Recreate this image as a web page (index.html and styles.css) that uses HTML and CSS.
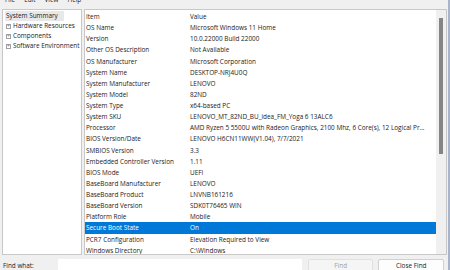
FILE: index.html
```html
<!DOCTYPE html>
<html lang="en">
<head>
 <meta charset="UTF-8">
 <title>System Information</title>
 <link rel="stylesheet" href="styles.css">
</head>
<body>
<div class="window">
 <div class="menubar">
  <span>File</span><span>Edit</span><span>View</span><span>Help</span>
 </div>
 <div class="main">
  <ul class="tree">
   <li class="root">System Summary</li>
   <li><span class="plus">+</span>Hardware Resources</li>
   <li><span class="plus">+</span>Components</li>
   <li><span class="plus">+</span>Software Environment</li>
  </ul>
  <div class="list">
   <div class="rows">
    <div class="row head"><span>Item</span><span>Value</span></div>
    <div class="row"><span>OS Name</span><span>Microsoft Windows 11 Home</span></div>
    <div class="row"><span>Version</span><span>10.0.22000 Build 22000</span></div>
    <div class="row"><span>Other OS Description</span><span>Not Available</span></div>
    <div class="row"><span>OS Manufacturer</span><span>Microsoft Corporation</span></div>
    <div class="row"><span>System Name</span><span>DESKTOP-NRJ4U0Q</span></div>
    <div class="row"><span>System Manufacturer</span><span>LENOVO</span></div>
    <div class="row"><span>System Model</span><span>82ND</span></div>
    <div class="row"><span>System Type</span><span>x64-based PC</span></div>
    <div class="row"><span>System SKU</span><span>LENOVO_MT_82ND_BU_idea_FM_Yoga 6 13ALC6</span></div>
    <div class="row"><span>Processor</span><span>AMD Ryzen 5 5500U with Radeon Graphics, 2100 Mhz, 6 Core(s), 12 Logical Pr...</span></div>
    <div class="row"><span>BIOS Version/Date</span><span>LENOVO H6CN11WW(V1.04), 7/7/2021</span></div>
    <div class="row"><span>SMBIOS Version</span><span>3.3</span></div>
    <div class="row"><span>Embedded Controller Version</span><span>1.11</span></div>
    <div class="row"><span>BIOS Mode</span><span>UEFI</span></div>
    <div class="row"><span>BaseBoard Manufacturer</span><span>LENOVO</span></div>
    <div class="row"><span>BaseBoard Product</span><span>LNVNB161216</span></div>
    <div class="row"><span>BaseBoard Version</span><span>SDK0T76465 WIN</span></div>
    <div class="row"><span>Platform Role</span><span>Mobile</span></div>
    <div class="row selected"><span>Secure Boot State</span><span>On</span></div>
    <div class="row"><span>PCR7 Configuration</span><span>Elevation Required to View</span></div>
    <div class="row"><span>Windows Directory</span><span>C:\Windows</span></div>
   </div>
   <div class="scrollbar"><div class="thumb"></div></div>
  </div>
 </div>
 <div class="findbar">
  <label>Find what:</label>
  <div class="find-input"></div>
  <button class="btn" disabled>Find</button>
  <button class="btn">Close Find</button>
 </div>
</div>
</body>
</html>
```

FILE: styles.css
```css
html, body {
 margin: 0;
 padding: 0;
}
body {
 width: 450px;
 height: 270px;
 overflow: hidden;
 background: #f0f0f0;
 font-family: "Open Sans", "Noto Sans", sans-serif;
 font-size: 6.4px;
 color: #1a1a1a;
}
.window {
 height: 270px;
 border-right: 2px solid #a9b3c9;
 box-sizing: border-box;
 display: flex;
 flex-direction: column;
}
.menubar {
 height: 9px;
 overflow: hidden;
 display: flex;
 gap: 9px;
 padding-left: 5px;
}
.menubar span {
 line-height: 8px;
 margin-top: -4px;
}
.main {
 display: flex;
 height: 246px;
 padding: 0 1px 0 2px;
 gap: 2px;
}
.tree {
 list-style: none;
 margin: 0;
 padding: 1px 0 0 2px;
 width: 80px;
 box-sizing: border-box;
 background: #fff;
 border: 1px solid #c8c8c8;
}
.tree li {
 height: 10px;
 line-height: 10px;
 white-space: nowrap;
 display: flex;
 align-items: center;
}
.tree .root {
 background: #e8e8e8;
 width: 58px;
 padding-left: 1px;
}
.plus {
 width: 5px;
 height: 5px;
 border: 1px solid #a0a0a0;
 box-sizing: border-box;
 font-size: 5px;
 line-height: 3px;
 text-align: center;
 color: #808080;
 margin: 0 2px 0 1px;
}
.list {
 flex: 1;
 display: flex;
 background: #fff;
 border: 1px solid #c8c8c8;
 overflow: hidden;
}
.rows {
 flex: 1;
 padding-top: 1px;
}
.row {
 display: grid;
 grid-template-columns: 104px 1fr;
 height: 11.14px;
 line-height: 11.14px;
 padding-left: 1px;
 white-space: nowrap;
 overflow: hidden;
}
.row.selected {
 background: #0078d7;
 color: #fff;
}
.scrollbar {
 width: 10px;
 background: #f0f0f0;
 display: flex;
 justify-content: center;
 padding-top: 8px;
}
.thumb {
 width: 4px;
 height: 136px;
 background: #858585;
}
.findbar {
 display: flex;
 align-items: center;
 height: 15px;
 padding: 0 4px 0 3px;
 gap: 5px;
}
.findbar label {
 width: 49px;
 margin-top: 6px;
}
.find-input {
 width: 246px;
 height: 13px;
 margin-top: 6px;
 background: #fff;
 border: 1px solid #f0f0f0;
}
.btn {
 width: 66px;
 height: 13px;
 margin-top: 6px;
 font: inherit;
 padding: 0;
 background: #fdfdfd;
 border: 1px solid #d0d0d0;
 border-radius: 2px;
 color: #1a1a1a;
}
.btn:disabled {
 color: #a0a0a0;
 background: #f5f5f5;
 border-color: #e0e0e0;
}
```
